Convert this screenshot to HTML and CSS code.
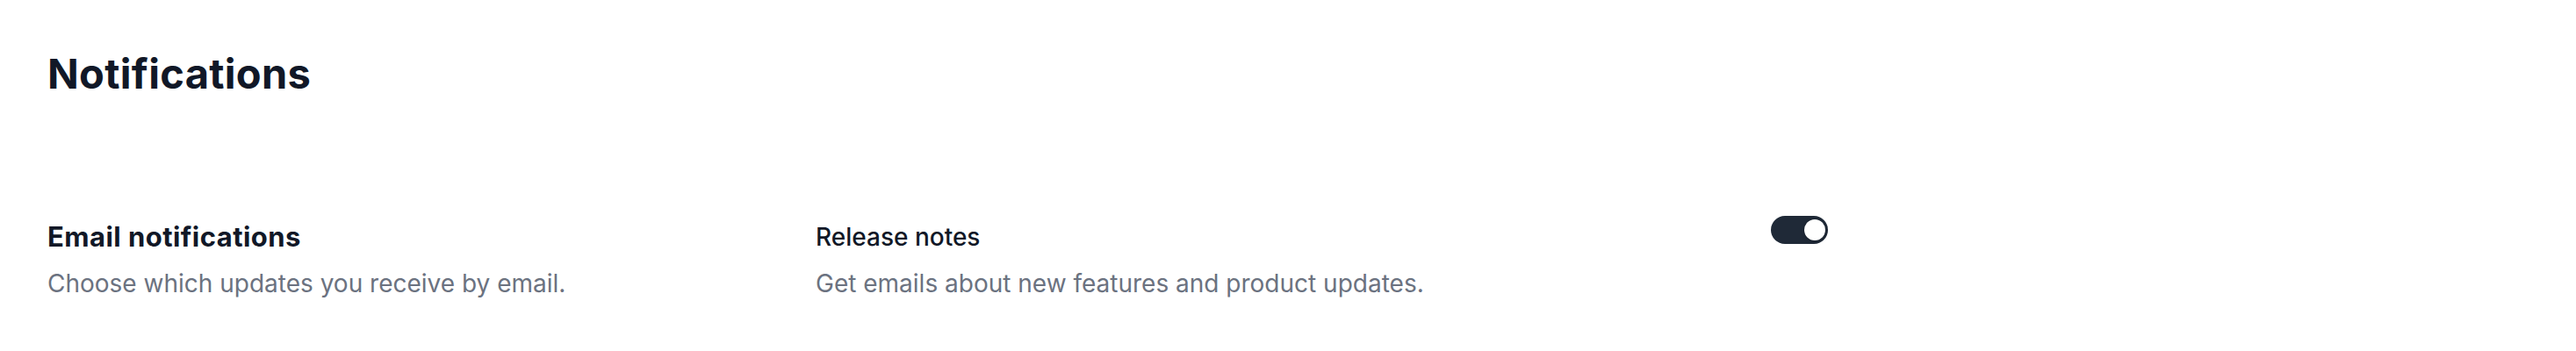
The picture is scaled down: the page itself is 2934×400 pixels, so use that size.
FILE: index.html
```html
<!DOCTYPE html>
<html lang="en">
  <head>
    <meta charset="UTF-8" />
    <meta name="viewport" content="width=device-width, initial-scale=1.0" />
    <title>Notifications</title>

    <link rel="stylesheet" href="styles.css">
  </head>

  <body>
    <main class="settings">
      <h1 class="settings-title">Notifications</h1>

      <section class="settings-group">
        <div class="group-info">
          <h2>Email notifications</h2>
          <p>Choose which updates you receive by email.</p>
        </div>

        <div class="option">
          <h3>Release notes</h3>
          <p>Get emails about new features and product updates.</p>
        </div>

        <button class="toggle is-on" type="button" role="switch" aria-checked="true">
          <span class="toggle-knob"></span>
        </button>
      </section>
    </main>
  </body>
</html>
```

FILE: styles.css
```css
html,
body {
  margin: 0;
  padding: 0;
}

body {
  background: #fff;
  font-family: Inter, "Noto Sans", sans-serif;
  color: #111827;
}

.settings {
  padding: 54px 54px 0;
}

.settings-title {
  margin: 0;
  font-size: 47px;
  line-height: 60px;
  font-weight: 700;
  letter-spacing: 0.3px;
}

.settings-group {
  display: grid;
  grid-template-columns: 875px 1088px 65px;
  align-items: start;
  margin-top: 136px;
}

.settings-group h2,
.settings-group h3,
.settings-group p {
  margin: 0;
}

.group-info h2 {
  font-size: 31px;
  line-height: 40px;
  font-weight: 700;
  letter-spacing: 0.45px;
}

.option h3 {
  font-size: 28px;
  line-height: 40px;
  font-weight: 500;
}

.settings-group p {
  margin-top: 14px;
  font-size: 28px;
  line-height: 38px;
  color: #6b7280;
}

/* switch: dark track when on, knob slides right */
.toggle {
  position: relative;
  width: 65px;
  height: 32px;
  margin-top: -4px;
  padding: 0;
  border: none;
  border-radius: 16px;
  background: #e5e7eb;
  cursor: pointer;
}

.toggle.is-on {
  background: #1f2937;
}

.toggle-knob {
  position: absolute;
  top: 4px;
  left: 3px;
  width: 24px;
  height: 24px;
  border-radius: 50%;
  background: #fff;
  box-shadow: 0 0 0 1px rgba(0, 0, 0, 0.05), 0 2px 4px rgba(0, 0, 0, 0.15);
}

.toggle.is-on .toggle-knob {
  left: 38px;
}
```
